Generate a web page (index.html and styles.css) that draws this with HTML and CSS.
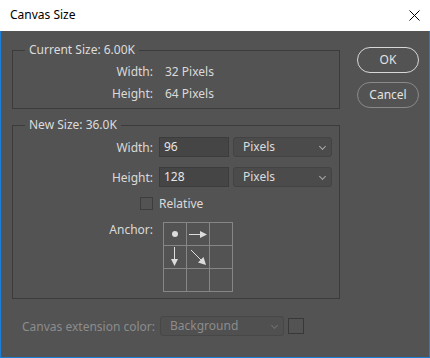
FILE: index.html
```html
<!DOCTYPE html>
<html lang="en">
<head>
  <meta charset="UTF-8" />
  <title>Canvas Size</title>
  <link rel="stylesheet" href="styles.css">
</head>
<body>

  <div class="window">
    <div class="titlebar">
      <span class="title">Canvas Size</span>
      <svg class="close" width="11" height="11" viewBox="0 0 11 11">
        <path d="M0.5 0.5 L10.5 10.5 M10.5 0.5 L0.5 10.5" stroke="#000" stroke-width="1" fill="none"/>
      </svg>
    </div>

    <div class="dialog">
      <div class="main">
        <fieldset class="group current">
          <legend>Current Size: 6.00K</legend>
          <div class="row info">
            <span class="label">Width:</span>
            <span class="value">32 Pixels</span>
          </div>
          <div class="row info">
            <span class="label">Height:</span>
            <span class="value">64 Pixels</span>
          </div>
        </fieldset>

        <fieldset class="group newsize">
          <legend>New Size: 36.0K</legend>
          <div class="row field">
            <span class="label">Width:</span>
            <div class="input">96</div>
            <div class="select">Pixels<span class="chev"></span></div>
          </div>
          <div class="row field">
            <span class="label">Height:</span>
            <div class="input">128</div>
            <div class="select">Pixels<span class="chev"></span></div>
          </div>
          <div class="row check">
            <span class="label"><span class="checkbox"></span></span>
            <span class="value">Relative</span>
          </div>
          <div class="row anchor">
            <span class="label">Anchor:</span>
            <div class="anchor-grid">
              <div class="cell">
                <svg width="22" height="22" viewBox="0 0 22 22"><circle cx="11" cy="11" r="3" fill="#dcdcdc"/></svg>
              </div>
              <div class="cell">
                <svg width="22" height="22" viewBox="0 0 22 22">
                  <path d="M2 11.5 H14" stroke="#dcdcdc" stroke-width="1"/>
                  <path d="M13 8 L20 11.5 L13 15 Z" fill="#dcdcdc"/>
                </svg>
              </div>
              <div class="cell"></div>
              <div class="cell">
                <svg width="22" height="22" viewBox="0 0 22 22">
                  <path d="M10.5 1 V14" stroke="#dcdcdc" stroke-width="1"/>
                  <path d="M7 13 L10.5 20 L14 13 Z" fill="#dcdcdc"/>
                </svg>
              </div>
              <div class="cell">
                <svg width="22" height="22" viewBox="0 0 22 22">
                  <path d="M4 4 L14 14" stroke="#dcdcdc" stroke-width="1"/>
                  <path d="M11 16.5 L19 19 L16.5 11 Z" fill="#dcdcdc"/>
                </svg>
              </div>
              <div class="cell"></div>
              <div class="cell"></div>
              <div class="cell"></div>
              <div class="cell"></div>
            </div>
          </div>
        </fieldset>

        <div class="ext-row">
          <span class="ext-label">Canvas extension color:</span>
          <div class="select disabled">Background<span class="chev"></span></div>
          <div class="swatch"></div>
        </div>
      </div>

      <div class="buttons">
        <div class="btn primary">OK</div>
        <div class="btn">Cancel</div>
      </div>
    </div>
  </div>

</body>
</html>
```

FILE: styles.css
```css
* {
  margin: 0;
  padding: 0;
  box-sizing: border-box;
}

html, body {
  width: 430px;
  height: 358px;
  font-family: "Noto Sans", "Open Sans", sans-serif;
  font-size: 12px;
  overflow: hidden;
  background: #535353;
}

.window {
  width: 430px;
  height: 358px;
  border: 1px solid #1a7fd5;
  border-top: none;
  background: #535353;
  color: #dadada;
}

.titlebar {
  height: 31px;
  margin: 0 -1px;
  background: #fff;
  color: #000;
  display: flex;
  align-items: center;
  justify-content: space-between;
  padding: 0 10px 0 10px;
}

.title {
  line-height: 16px;
  margin-top: -1px;
}

.close {
  display: block;
  margin-top: -1px;
}

.dialog {
  display: flex;
  padding-left: 11px;
}

.main {
  width: 328px;
}

.group {
  border: 1px solid #3b3b3b;
  padding: 0 0 4px 0;
}

.group legend {
  margin-left: 12px;
  padding: 0 4px;
  line-height: 16px;
  color: #dcdcdc;
}

.current {
  margin-top: 11px;
  padding-top: 2px;
}

.newsize {
  margin-top: 8px;
  padding-top: 4px;
  padding-bottom: 6px;
}

.row {
  display: flex;
  align-items: center;
}

.label {
  width: 140px;
  text-align: right;
  flex-shrink: 0;
  display: flex;
  justify-content: flex-end;
}

.info {
  height: 22px;
}

.info .value {
  margin-left: 12px;
}

.field {
  height: 20px;
  margin-bottom: 10px;
}

.input {
  width: 70px;
  height: 20px;
  margin-left: 6px;
  background: #454545;
  border: 1px solid #3c3c3c;
  padding-left: 4px;
  line-height: 18px;
  color: #e6e6e6;
}

.select {
  position: relative;
  width: 99px;
  height: 20px;
  margin-left: 4px;
  background: #4b4b4b;
  border: 1px solid #434343;
  border-radius: 3px;
  padding-left: 9px;
  line-height: 18px;
  color: #dcdcdc;
}

.chev {
  position: absolute;
  right: 6px;
  top: 6px;
  width: 5px;
  height: 5px;
  border-right: 1px solid #a8a8a8;
  border-bottom: 1px solid #a8a8a8;
  transform: rotate(45deg);
}

.check {
  height: 13px;
  margin-bottom: 12px;
}

.checkbox {
  display: block;
  width: 13px;
  height: 13px;
  border: 1px solid #3d3d3d;
  background: #535353;
}

.check .value {
  margin-left: 6px;
}

.anchor {
  align-items: flex-start;
}

.anchor .label {
  line-height: 16px;
}

.anchor-grid {
  margin-left: 10px;
  display: grid;
  grid-template-columns: repeat(3, 23px);
  grid-template-rows: repeat(3, 23px);
  border-left: 1px solid #868686;
  border-top: 1px solid #868686;
}

.cell {
  border-right: 1px solid #868686;
  border-bottom: 1px solid #868686;
}

.cell svg {
  display: block;
}

.ext-row {
  display: flex;
  align-items: center;
  margin-top: 17px;
  height: 20px;
}

.ext-label {
  width: 141px;
  padding-left: 10px;
  color: #8c8c8c;
  white-space: nowrap;
}

.select.disabled {
  width: 124px;
  margin-left: 7px;
  background: #505050;
  border-color: #474747;
  color: #8c8c8c;
}

.select.disabled .chev {
  border-color: #6e6e6e;
}

.swatch {
  width: 16px;
  height: 16px;
  margin-left: 4px;
  border: 1px solid #383838;
}

.buttons {
  margin-left: 17px;
  padding-top: 16px;
  display: flex;
  flex-direction: column;
  gap: 9px;
}

.btn {
  width: 62px;
  height: 26px;
  border: 1px solid #8a8a8a;
  border-radius: 13px;
  text-align: center;
  line-height: 24px;
  color: #e2e2e2;
}

.btn.primary {
  border-color: #d8d8d8;
}
```
